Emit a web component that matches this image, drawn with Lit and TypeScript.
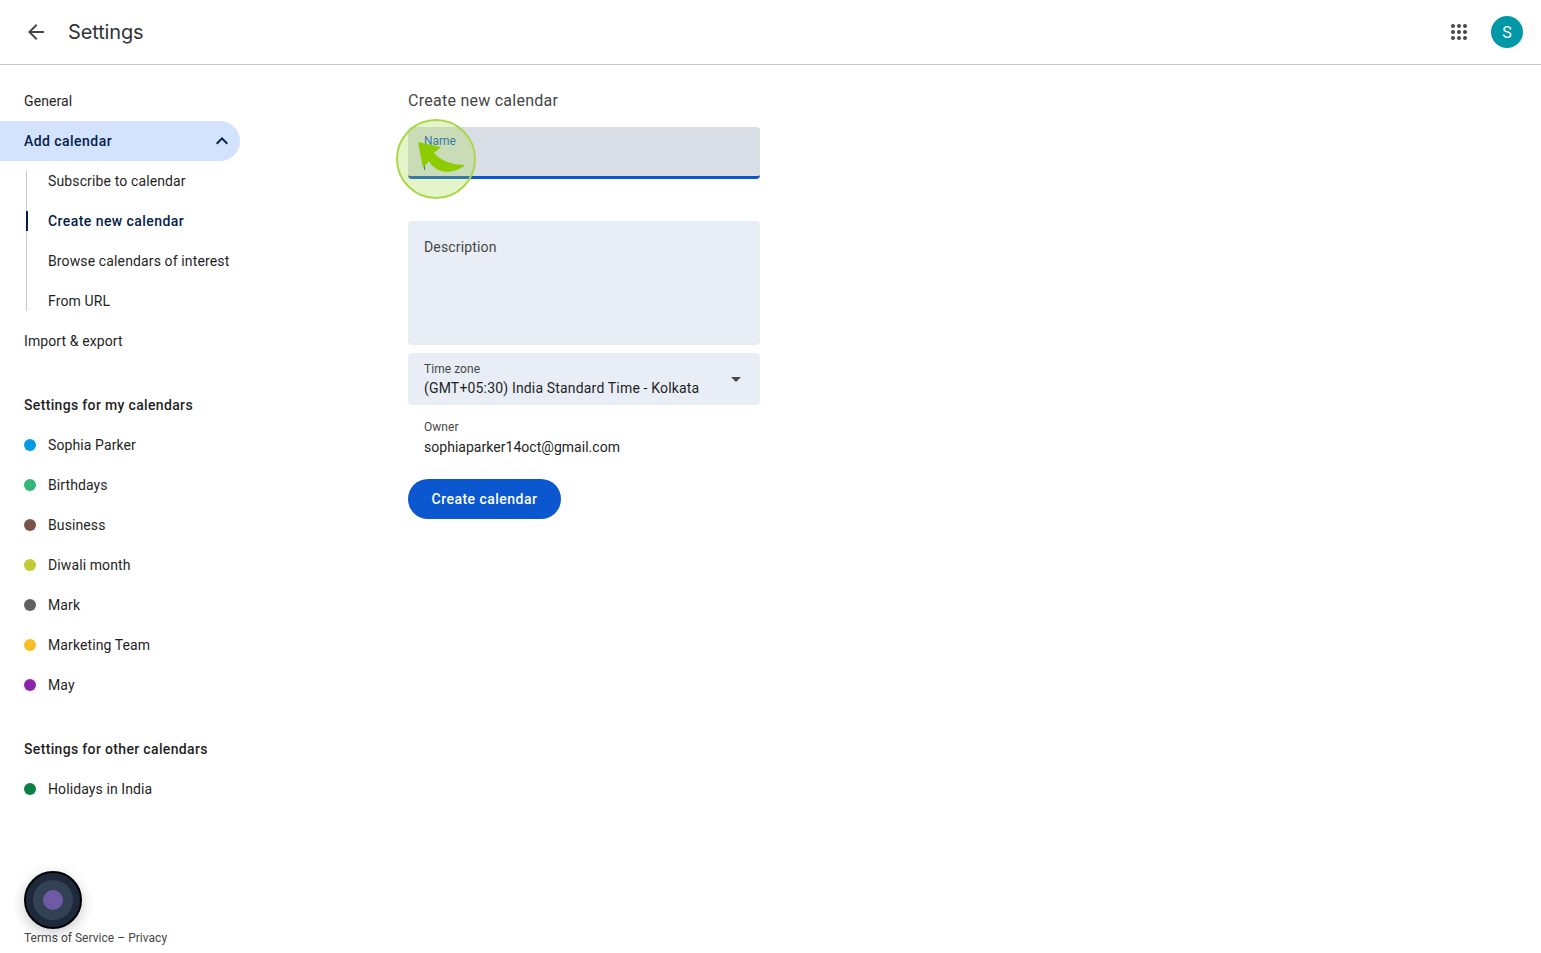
import { LitElement, html, svg, css } from "lit";
import { customElement } from "lit/decorators.js";

const mine = [
  ["Sophia Parker", "#039be5"],
  ["Birthdays", "#33b679"],
  ["Business", "#795548"],
  ["Diwali month", "#c0ca33"],
  ["Mark", "#616161"],
  ["Marketing Team", "#f6bf26"],
  ["May", "#8e24aa"],
];

@customElement("app-root")
export class AppRoot extends LitElement {
  static styles = css`
    :host { display: block; position: relative; height: 953px; overflow: hidden; background: #fff; font-family: Roboto, "Liberation Sans", sans-serif; color: #1f1f1f; font-size: 14px; }
    header { height: 64px; border-bottom: 1px solid #c7c7c7; display: flex; align-items: center; padding: 0 18px 0 24px; }
    .back { width: 24px; height: 24px; fill: #444746; }
    h1 { margin: 0 0 0 20px; font: 400 20px/28px Inter, Roboto, sans-serif; letter-spacing: -0.13px; color: #303336; flex: 1; }
    .apps { width: 24px; height: 24px; fill: #444746; margin-right: 20px; }
    .avatar { width: 32px; height: 32px; border-radius: 50%; background: #0097a7; color: #fff; font-size: 16px; display: flex; align-items: center; justify-content: center; }
    .body { display: flex; height: 888px; }
    nav { width: 408px; padding-top: 16px; display: flex; flex-direction: column; box-sizing: border-box; }
    .row { height: 40px; width: 240px; box-sizing: border-box; display: flex; align-items: center; padding-left: 24px; letter-spacing: 0.1px; }
    .active { background: #d3e3fd; border-radius: 0 20px 20px 0; font-weight: 500; letter-spacing: 0.45px; color: #041e49; justify-content: space-between; padding-right: 6px; }
    .chev { width: 24px; height: 24px; fill: #041e49; }
    .subs { margin-left: 26px; width: 214px; position: relative; }
    .subs::before { content: ""; position: absolute; left: 0; top: 10px; bottom: 10px; width: 1px; background: #c7c7c7; }
    .sub { height: 40px; display: flex; align-items: center; padding-left: 22px; white-space: nowrap; letter-spacing: 0.13px; }
    .sub.on { font-weight: 500; letter-spacing: 0.43px; color: #041e49; position: relative; }
    .sub.on::before { content: ""; position: absolute; left: 0; top: 10px; height: 20px; width: 2px; background: #041e49; }
    .head { font-weight: 500; letter-spacing: 0.34px; margin-top: 24px; color: #1f1f1f; }
    .dot { width: 12px; height: 12px; border-radius: 50%; margin-right: 12px; flex: none; }
    .foot { margin-top: auto; padding: 0 0 7px 24px; font-size: 12px; line-height: 16px; letter-spacing: 0.03px; color: #444746; }
    main { width: 352px; padding-top: 24px; box-sizing: border-box; }
    h2 { margin: 0; font: 400 16px/24px Roboto, sans-serif; letter-spacing: 0.26px; color: #444746; height: 38px; }
    .field { background: #e9eef6; border-radius: 4px; box-sizing: border-box; padding-left: 16px; color: #444746; }
    .name { height: 52px; background: #d9dde6; border-bottom: 3px solid #0b57d0; color: #0b57d0; font-size: 12px; line-height: 16px; padding-top: 6px; margin-bottom: 42px; position: relative; }
    .caret { position: absolute; left: 16px; top: 33px; width: 1px; height: 10px; background: #0b57d0; }
    .desc { height: 124px; padding-top: 16px; font-size: 14px; line-height: 20px; letter-spacing: 0.15px; margin-bottom: 8px; }
    .tz { height: 52px; padding-top: 8px; display: flex; justify-content: space-between; }
    .lab { font-size: 12px; line-height: 16px; letter-spacing: 0.05px; color: #444746; }
    .val { font-size: 14px; line-height: 20px; color: #1f1f1f; margin-top: 1px; letter-spacing: 0.17px; }
    .arrow { width: 0; height: 0; border: 5px solid transparent; border-top-color: #444746; border-bottom-width: 0; margin: 16px 19px 0 0; }
    .owner { padding: 14px 0 0 16px; height: 74px; box-sizing: border-box; }
    .owner .val { margin-top: 2px; letter-spacing: 0.03px; }
    button { width: 153px; height: 40px; border: 0; padding: 0; border-radius: 20px; background: #0b57d0; color: #fff; font: 500 14px Roboto, sans-serif; letter-spacing: 0.47px; }
    .spot { position: absolute; left: 396px; top: 119px; width: 80px; height: 80px; box-sizing: border-box; border-radius: 50%; border: 2px solid #a8d84a; background: rgba(160, 215, 60, 0.28); }
    .pointer { position: absolute; left: 416px; top: 138px; width: 52px; height: 36px; fill: #8ccc00; filter: blur(0.4px); }
    .bubble { position: absolute; left: 24px; top: 871px; width: 58px; height: 58px; box-sizing: border-box; border-radius: 50%; background: #1e293b; border: 2px solid #000; box-shadow: 0 4px 14px rgba(0,0,0,.22); display: flex; align-items: center; justify-content: center; }
    .ring { width: 40px; height: 40px; border-radius: 50%; background: #334155; display: flex; align-items: center; justify-content: center; }
    .core { width: 20px; height: 20px; border-radius: 50%; background: #6f5aa5; }
  `;

  render() {
    return html`
      <header>
        <svg class="back" viewBox="0 0 24 24"><path d="M20 11H7.83l5.59-5.59L12 4l-8 8 8 8 1.41-1.41L7.83 13H20z"/></svg>
        <h1>Settings</h1>
        <svg class="apps" viewBox="0 0 24 24">
          ${[6, 12, 18].flatMap((y) => [6, 12, 18].map((x) => svg`<circle cx=${x} cy=${y} r="2"/>`))}
        </svg>
        <div class="avatar">S</div>
      </header>
      <div class="body">
        <nav>
          <div class="row">General</div>
          <div class="row active">Add calendar
            <svg class="chev" viewBox="0 0 24 24"><path d="M12 8l-6 6 1.41 1.41L12 10.83l4.59 4.58L18 14z"/></svg>
          </div>
          <div class="subs">
            <div class="sub">Subscribe to calendar</div>
            <div class="sub on">Create new calendar</div>
            <div class="sub">Browse calendars of interest</div>
            <div class="sub">From URL</div>
          </div>
          <div class="row">Import &amp; export</div>
          <div class="row head">Settings for my calendars</div>
          ${mine.map(([n, c]) => html`<div class="row"><span class="dot" style="background:${c}"></span>${n}</div>`)}
          <div class="row head">Settings for other calendars</div>
          <div class="row"><span class="dot" style="background:#0b8043"></span>Holidays in India</div>
          <div class="foot">Terms of Service – Privacy</div>
        </nav>
        <main>
          <h2>Create new calendar</h2>
          <div class="field name">Name<span class="caret"></span></div>
          <div class="field desc">Description</div>
          <div class="field tz">
            <div><div class="lab">Time zone</div><div class="val">(GMT+05:30) India Standard Time - Kolkata</div></div>
            <span class="arrow"></span>
          </div>
          <div class="owner"><div class="lab">Owner</div><div class="val">sophiaparker14oct@gmail.com</div></div>
          <button>Create calendar</button>
        </main>
      </div>
      <div class="spot"></div>
      <svg class="pointer" viewBox="0 0 52 36"><path d="M2 4 L25 9 L18 15 C25 23 36 27 49 27 C42 33 31 36 23 32 C18 30 15 27 13 23 L7 30 Z"/></svg>
      <div class="bubble"><div class="ring"><div class="core"></div></div></div>
    `;
  }
}
